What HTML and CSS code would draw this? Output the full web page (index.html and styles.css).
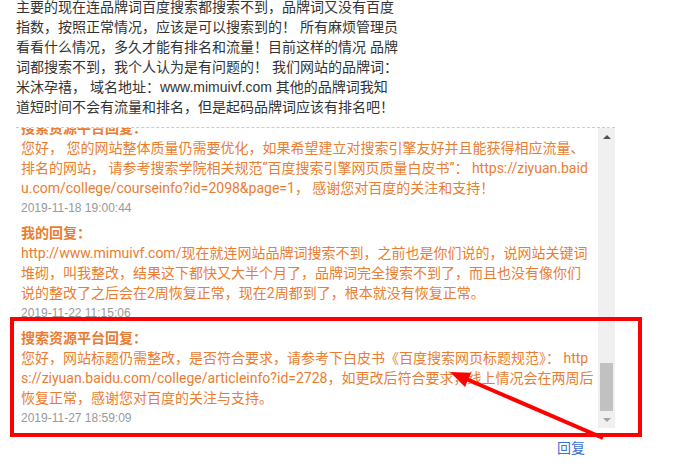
FILE: index.html
```html
<!DOCTYPE html>
<html lang="zh-CN">
<head>
    <meta charset="UTF-8">
    <meta name="viewport" content="width=device-width, initial-scale=1.0">
    <title>反馈详情</title>
    <link rel="stylesheet" href="styles.css">
</head>
<body>
    <div class="page">
        <p class="question">主要的现在连品牌词百度搜索都搜索不到，品牌词又没有百度指数，按照正常情况，应该是可以搜索到的！ 所有麻烦管理员看看什么情况，多久才能有排名和流量！目前这样的情况 品牌词都搜索不到，我个人认为是有问题的！ 我们网站的品牌词：米沐孕禧， 域名地址：www.mimuivf.com 其他的品牌词我知道短时间不会有流量和排名，但是起码品牌词应该有排名吧！</p>

        <div class="replies">
            <div class="reply-list">
                <div class="reply">
                    <h4>搜索资源平台回复：</h4>
                    <p>您好， 您的网站整体质量仍需要优化，如果希望建立对搜索引擎友好并且能获得相应流量、排名的网站， 请参考搜索学院相关规范“百度搜索引擎网页质量白皮书”： https://ziyuan.baidu.com/college/courseinfo?id=2098&amp;page=1， 感谢您对百度的关注和支持！</p>
                    <span class="time">2019-11-18 19:00:44</span>
                </div>
                <div class="reply">
                    <h4>我的回复：</h4>
                    <p>http://www.mimuivf.com/现在就连网站品牌词搜索不到，之前也是你们说的，说网站关键词堆砌，叫我整改，结果这下都快又大半个月了，品牌词完全搜索不到了，而且也没有像你们说的整改了之后会在2周恢复正常，现在2周都到了，根本就没有恢复正常。</p>
                    <span class="time">2019-11-22 11:15:06</span>
                </div>
                <div class="reply">
                    <h4>搜索资源平台回复：</h4>
                    <p>您好，网站标题仍需整改，是否符合要求，请参考下白皮书《百度搜索网页标题规范》： https://ziyuan.baidu.com/college/articleinfo?id=2728，如更改后符合要求，线上情况会在两周后恢复正常，感谢您对百度的关注与支持。</p>
                    <span class="time">2019-11-27 18:59:09</span>
                </div>
            </div>
            <div class="scrollbar">
                <span class="arrow arrow-up"></span>
                <div class="track"><div class="thumb"></div></div>
                <span class="arrow arrow-down"></span>
            </div>
        </div>

        <div class="actions"><a href="#" class="reply-link">回复</a></div>

        <!-- 标注：红框和箭头 -->
        <svg class="mark" width="683" height="472" viewBox="0 0 683 472">
            <rect x="12" y="319" width="628" height="116" fill="none" stroke="#f00" stroke-width="4"/>
            <line x1="603" y1="438" x2="464" y2="378" stroke="#f00" stroke-width="4"/>
            <polygon points="450,372 471,372.8 465,387" fill="#f00"/>
        </svg>
    </div>
</body>
</html>
```

FILE: styles.css
```css
* {margin: 0; padding: 0; box-sizing: border-box;}
body {
    background: #fff;
    font-family: "Liberation Sans", "Noto Sans CJK SC", sans-serif;
    font-size: 14px;
    line-height: 20px;
}
.page {
    position: relative;
    width: 683px;
    height: 472px;
    padding-left: 16px;
    overflow: hidden;
}
.question {
    width: 384px;
    margin-top: -3px;
    color: #333;
}
.replies {
    display: flex;
    width: 599px;
    height: 301px;
    margin-top: 10px;
    border-top: 1px dashed #ccc;
}
.reply-list {
    flex: 1;
    padding: 0 4px 0 5px;
    overflow: hidden;
    color: #ea7d31;
    word-break: break-all;
}
.reply {
    margin-bottom: 5px;
}
.reply:first-child {
    margin-top: -10px;
}
.reply h4 {
    font-size: 14px;
    font-weight: bold;
}
.reply p {
    font-family: Roboto, "Noto Sans CJK SC", sans-serif;
}
.time {
    display: block;
    font-size: 12px;
    color: #999;
}
.scrollbar {
    width: 17px;
    display: flex;
    flex-direction: column;
    background: #f0f0f0;
}
.arrow {
    height: 17px;
    display: flex;
    align-items: center;
    justify-content: center;
}
.arrow::after {
    content: "";
    border-left: 4px solid transparent;
    border-right: 4px solid transparent;
}
.arrow-up::after {
    border-bottom: 4px solid #505050;
}
.arrow-down::after {
    border-top: 4px solid #a3a3a3;
}
.track {
    flex: 1;
    display: flex;
    flex-direction: column;
    justify-content: flex-end;
}
.thumb {
    height: 48px;
    margin: 0 2px;
    background: #c1c1c1;
}
.actions {
    width: 599px;
    display: flex;
    justify-content: flex-end;
    padding-right: 30px;
    margin-top: 10px;
}
.reply-link {
    color: #3a6fd8;
    text-decoration: none;
}
.mark {
    position: absolute;
    left: 0;
    top: 0;
    pointer-events: none;
}
```
